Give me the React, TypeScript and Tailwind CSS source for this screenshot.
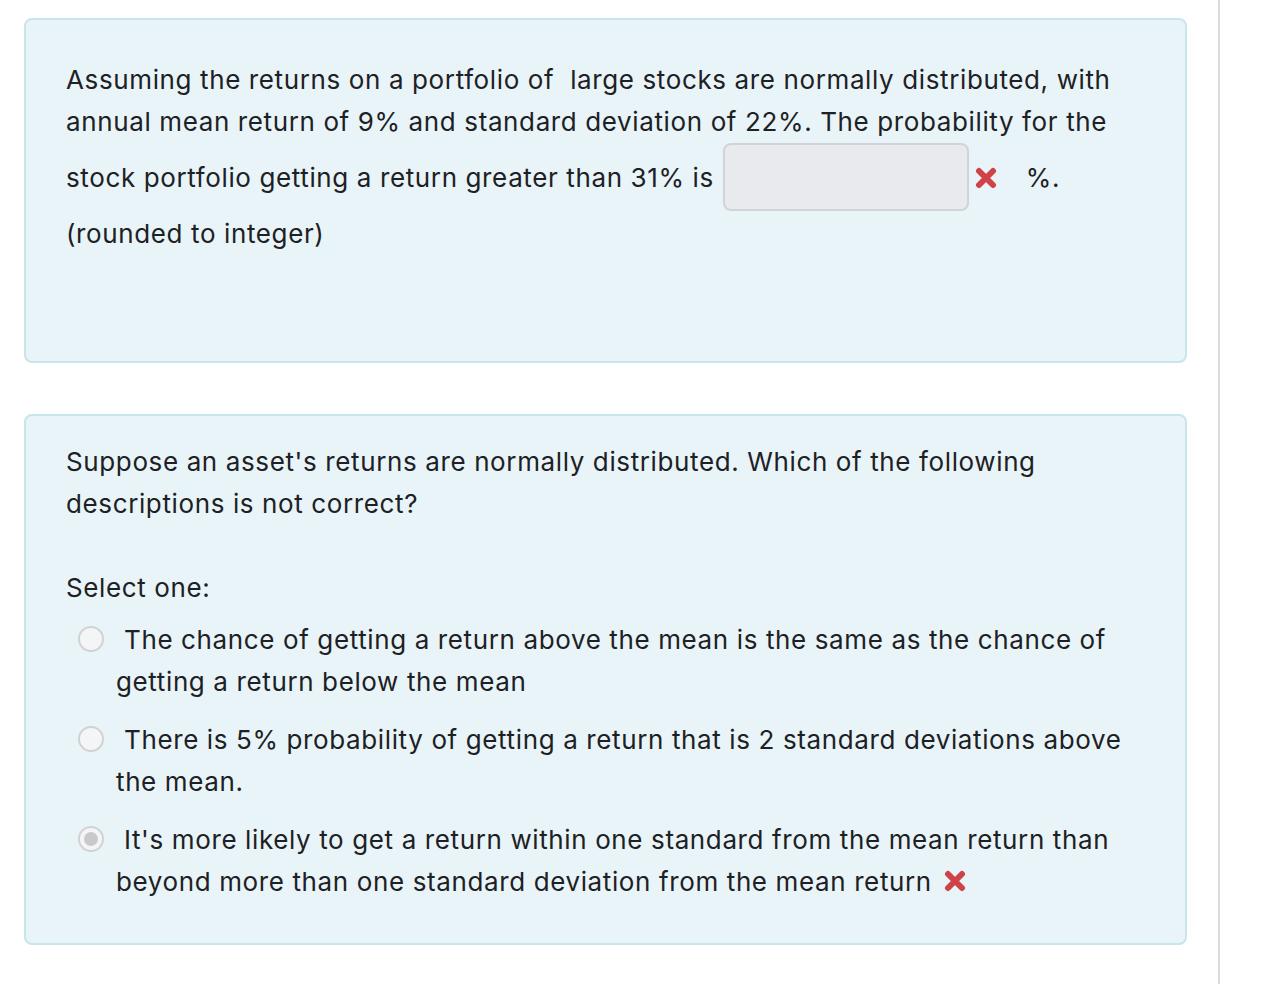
import React from 'react';

function WrongMark({ className = '' }: { className?: string }) {
  return (
    <svg viewBox="0 0 22 22" className={`inline-block w-[22px] h-[22px] ${className}`}>
      <path d="M4 4 L18 18 M18 4 L4 18" stroke="#cf4348" strokeWidth="6" strokeLinecap="round" fill="none" />
    </svg>
  );
}

function Radio({ checked = false }: { checked?: boolean }) {
  return (
    <span className="inline-flex items-center justify-center w-[26px] h-[26px] rounded-full border-2 border-[#d2d2d2] bg-[#f4f5f6] align-middle relative -top-[3px] mr-[20px] indent-0">
      {checked && <span className="block w-[14px] h-[14px] rounded-full bg-[#c9c9cc]" />}
    </span>
  );
}

const options = [
  {
    lines: ['The chance of getting a return above the mean is the same as the chance of', 'getting a return below the mean'],
    checked: false,
    wrong: false,
  },
  {
    lines: ['There is 5% probability of getting a return that is 2 standard deviations above', 'the mean.'],
    checked: false,
    wrong: false,
  },
  {
    lines: ["It's more likely to get a return within one standard from the mean return than", 'beyond more than one standard deviation from the mean return'],
    checked: true,
    wrong: true,
  },
];

export default function App() {
  return (
    <div
      className="flex min-h-[984px] bg-white text-[#1d2125] text-[26px] leading-[42px] tracking-[0.62px]"
      style={{ fontFamily: 'Inter, "Liberation Sans", Arial, sans-serif' }}
    >
      <div className="w-[1218px] shrink-0 pl-[24px] pr-[31px]">
        {/* numerical question */}
        <div className="mt-[18px] h-[345px] rounded-[8px] border-2 border-[#c8e5ec] bg-[#e8f4f7] pt-[39px] pl-[40px]">
          <div className="whitespace-nowrap">Assuming the returns on a portfolio of{'\u00a0'} large stocks are normally distributed, with</div>
          <div className="whitespace-nowrap">annual mean return of 9% and standard deviation of 22%. The probability for the</div>
          <div className="flex items-center h-[70px] whitespace-nowrap">
            <span>stock portfolio getting a return greater than 31% is</span>
            <span className="ml-[9px] mb-[2px] w-[246px] h-[68px] rounded-[8px] border-2 border-[#d0d3d7] bg-[#e9eaee]" />
            <WrongMark className="ml-[6px]" />
            <span className="ml-[29px]">%.</span>
          </div>
          <div>(rounded to integer)</div>
        </div>

        {/* multiple choice question */}
        <div className="mt-[51px] h-[531px] rounded-[8px] border-2 border-[#c8e5ec] bg-[#e8f4f7] pt-[25px] pl-[40px]">
          <div className="whitespace-nowrap">
            Suppose an asset's returns are normally distributed. Which of the following
            <br />
            descriptions is not correct?
          </div>
          <div className="mt-[42px]">Select one:</div>
          <div className="mt-[10px] flex flex-col gap-[16px]">
            {options.map((o, i) => (
              <div key={i} className="pl-[50px] indent-[-38px] whitespace-nowrap">
                <Radio checked={o.checked} />
                {o.lines[0]}
                <br />
                {o.lines[1]}
                {o.wrong && <WrongMark className="ml-[12px] align-middle relative -top-[3px]" />}
              </div>
            ))}
          </div>
        </div>
      </div>
      <div className="w-[2px] shrink-0 bg-[#dcdcdc]" />
      <div className="flex-1" />
    </div>
  );
}
